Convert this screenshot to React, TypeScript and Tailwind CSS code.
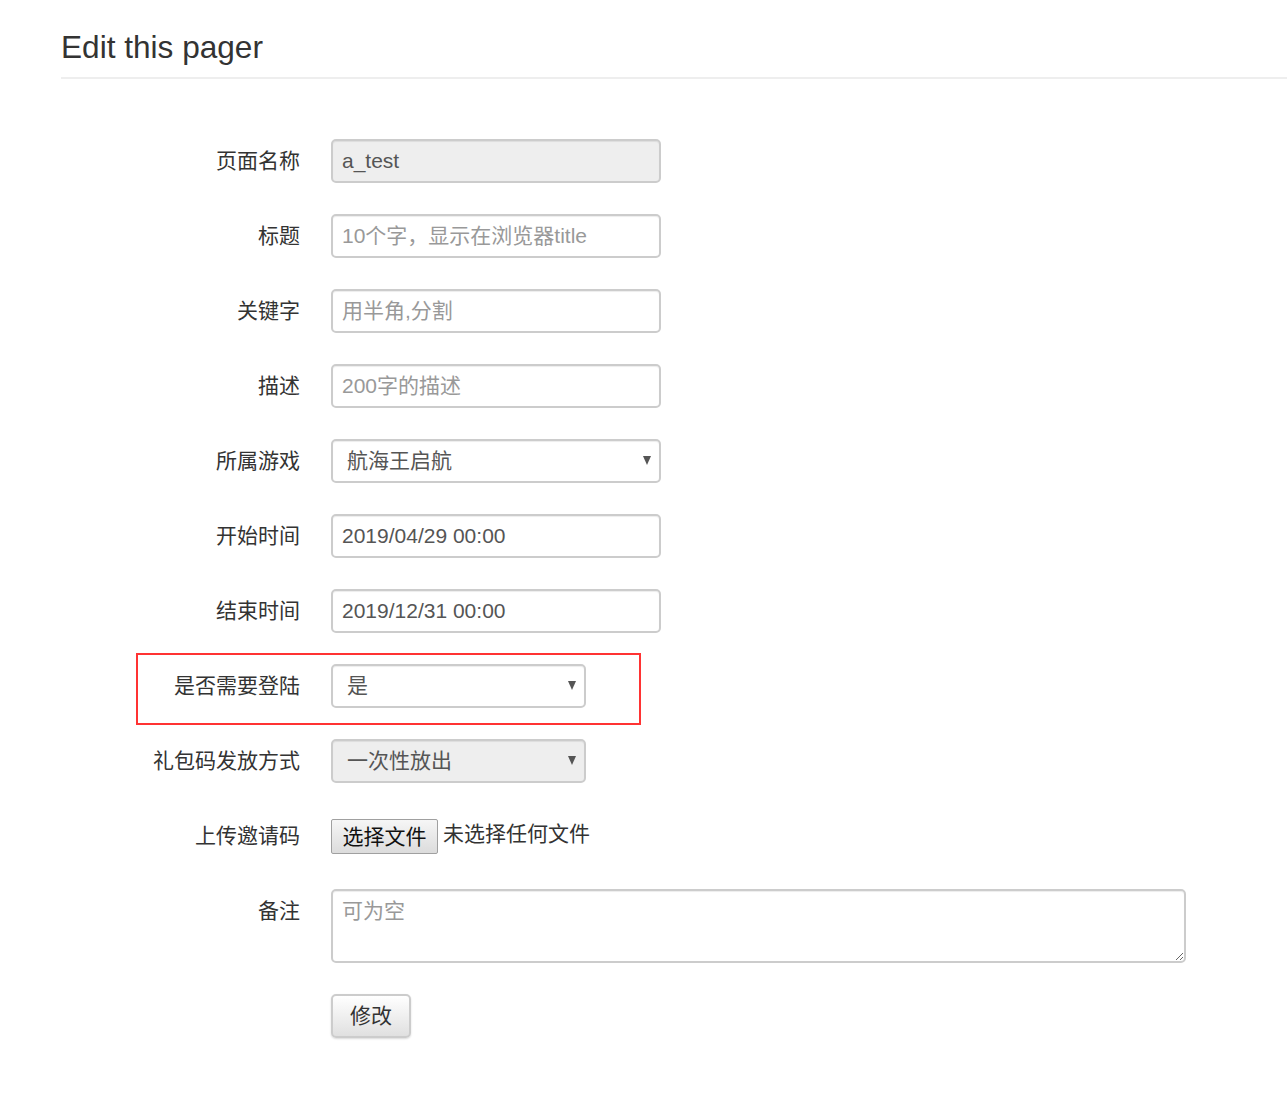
import React from 'react';

const font = { fontFamily: '"Liberation Sans", "Noto Sans CJK SC", sans-serif' };

function Row({ label, children, top = false }: { label: string; children: React.ReactNode; top?: boolean }) {
  return (
    <div className={`flex ${top ? 'items-start' : 'items-center'}`}>
      <label className={`w-[239px] shrink-0 text-right text-[21px] text-[#333] ${top ? 'leading-[44px]' : ''}`}>
        {label}
      </label>
      <div className="ml-[31px]">{children}</div>
    </div>
  );
}

function Select({ value, width, disabled = false }: { value: string; width: string; disabled?: boolean }) {
  return (
    <div className={`relative ${width}`}>
      <select
        disabled={disabled}
        defaultValue={value}
        className={`h-[44px] w-full appearance-none rounded-[5px] border-2 border-[#ccc] pl-[14px] pr-8 text-[21px] text-[#555] shadow-[inset_0_1px_1px_rgba(0,0,0,0.075)] outline-none ${
          disabled ? 'bg-[#eee]' : 'bg-white'
        }`}
        style={font}
      >
        <option>{value}</option>
      </select>
      <span className="pointer-events-none absolute right-[10px] top-[17px] h-0 w-0 border-l-[4px] border-r-[4px] border-t-[9px] border-l-transparent border-r-transparent border-t-[#555]" />
    </div>
  );
}

const inputCls =
  'h-[44px] w-[330px] rounded-[5px] border-2 border-[#ccc] px-[9px] text-[21px] text-[#555] placeholder:text-[#999] shadow-[inset_0_1px_1px_rgba(0,0,0,0.075)] outline-none';

export default function App() {
  return (
    <div className="min-h-screen bg-white pl-[61px] pt-[30px]" style={font}>
      <div className="border-b-2 border-[#eee] pb-[13px]">
        <h1 className="text-[31.6px] leading-[34px] text-[#333]">Edit this pager</h1>
      </div>

      <form className="mt-[60px] flex flex-col gap-[31px]" onSubmit={(e) => e.preventDefault()}>
        <Row label="页面名称">
          <input className={`${inputCls} bg-[#eee]`} defaultValue="a_test" disabled style={font} />
        </Row>
        <Row label="标题">
          <input className={`${inputCls} bg-white`} placeholder="10个字，显示在浏览器title" style={font} />
        </Row>
        <Row label="关键字">
          <input className={`${inputCls} bg-white`} placeholder="用半角,分割" style={font} />
        </Row>
        <Row label="描述">
          <input className={`${inputCls} bg-white`} placeholder="200字的描述" style={font} />
        </Row>
        <Row label="所属游戏">
          <Select value="航海王启航" width="w-[330px]" />
        </Row>
        <Row label="开始时间">
          <input className={`${inputCls} bg-white`} defaultValue="2019/04/29 00:00" style={font} />
        </Row>
        <Row label="结束时间">
          <input className={`${inputCls} bg-white`} defaultValue="2019/12/31 00:00" style={font} />
        </Row>
        <div className="relative">
          <Row label="是否需要登陆">
            <Select value="是" width="w-[255px]" />
          </Row>
          <div className="pointer-events-none absolute left-[75px] top-[-11px] h-[72px] w-[505px] border-2 border-[#f33]" />
        </div>
        <Row label="礼包码发放方式">
          <Select value="一次性放出" width="w-[255px]" disabled />
        </Row>
        <Row label="上传邀请码">
          <div className="flex h-[44px] items-center">
            <button
              type="button"
              className="h-[35px] w-[107px] rounded-[2px] border border-[#a0a0a0] bg-gradient-to-b from-[#f6f6f6] to-[#dcdcdc] text-[21px] leading-none text-[#111]"
              style={font}
            >
              选择文件
            </button>
            <span className="ml-[5px] -mt-[4px] text-[21px] text-[#333]">未选择任何文件</span>
          </div>
        </Row>
        <Row label="备注" top>
          <textarea
            className="block h-[74px] w-[855px] rounded-[5px] border-2 border-[#ccc] px-[9px] py-[5px] text-[21px] leading-[30px] text-[#555] placeholder:text-[#999] shadow-[inset_0_1px_1px_rgba(0,0,0,0.075)] outline-none"
            placeholder="可为空"
            style={font}
          />
        </Row>
        <div className="flex">
          <div className="w-[239px] shrink-0" />
          <button
            type="submit"
            className="ml-[31px] h-[44px] w-[80px] rounded-[5px] border-2 border-[#ccc] bg-gradient-to-b from-white to-[#e0e0e0] text-[21px] text-[#333] shadow-[0_1px_2px_rgba(0,0,0,0.15)]"
            style={font}
          >
            修改
          </button>
        </div>
      </form>
    </div>
  );
}
